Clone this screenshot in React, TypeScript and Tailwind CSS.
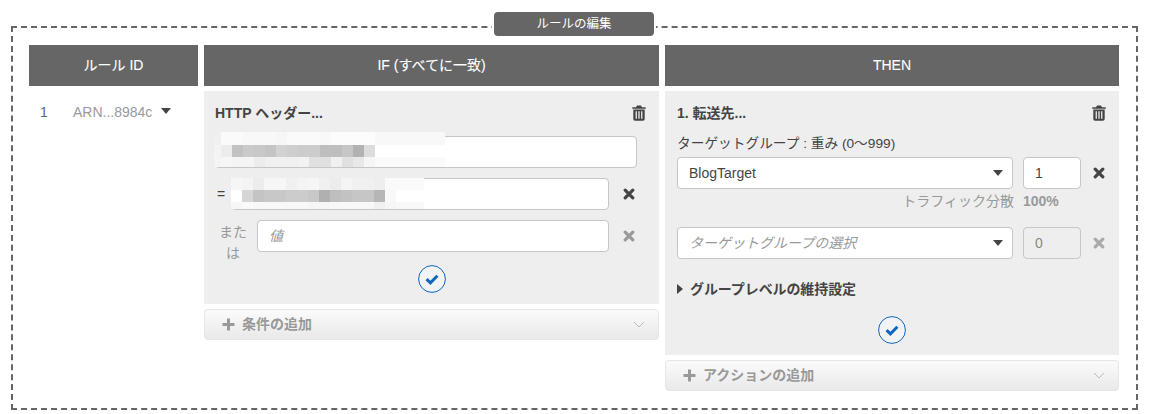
import React from "react";

const font = { fontFamily: '"Liberation Sans", "Noto Sans CJK JP", sans-serif' };

function Trash() {
  return (
    <svg width="14" height="16" viewBox="0 0 14 16" fill="#444">
      <path d="M5 0.5h4l1 1.7h3.2a.6.6 0 0 1 .6.6v.9H.2v-.9a.6.6 0 0 1 .6-.6H4z" />
      <path fillRule="evenodd" d="M1.3 4.6h11.4v9.4a1.7 1.7 0 0 1-1.7 1.7H3a1.7 1.7 0 0 1-1.7-1.7zM3.6 6.2v7.6h1.3V6.2zm2.75 0v7.6h1.3V6.2zm2.75 0v7.6h1.3V6.2z" />
    </svg>
  );
}

function Cross({ color = "#444" }: { color?: string }) {
  return (
    <svg width="12" height="12" viewBox="0 0 12 12" fill="none">
      <path d="M2.2 2.2l7.6 7.6M9.8 2.2l-7.6 7.6" stroke={color} strokeWidth="3.2" strokeLinecap="round" />
    </svg>
  );
}

function Confirm() {
  return (
    <svg width="28" height="28" viewBox="0 0 28 28" fill="none">
      <circle cx="14" cy="14" r="13.4" stroke="#1166bb" strokeWidth="1" fill="#f2f3f4" />
      <path d="M8.6 14.2l3.8 3.6 7-7" stroke="#1166bb" strokeWidth="3" />
    </svg>
  );
}

function Caret() {
  return <div className="h-0 w-0 border-x-[5px] border-t-[6px] border-x-transparent border-t-[#444]" />;
}

function Mosaic({ cols, rowH, offset, trim }: { cols: number[][]; rowH: number[]; offset: number; trim: number }) {
  const s = 11;
  const width = cols[0].length * s - offset - trim;
  const height = rowH.reduce((a, b) => a + b, 0);
  let y = 0;
  return (
    <svg width={width} height={height} className="block" shapeRendering="crispEdges">
      {cols.map((r, ri) => {
        const top = y;
        y += rowH[ri];
        return r.map((g, x) => (
          <rect key={`${x}-${ri}`} x={x * s - offset} y={top} width={s} height={rowH[ri]} fill={`rgb(${g},${g},${g})`} />
        ));
      })}
    </svg>
  );
}

const mosaicA = [
  [240, 250, 250, 248, 248, 248, 246, 250, 250, 250, 248, 252, 252, 252, 252, 248, 248, 248, 248, 248, 248, 248],
  [244, 236, 194, 202, 200, 196, 210, 206, 204, 204, 190, 190, 198, 178, 220, 255, 255, 255, 255, 255, 255, 255],
  [244, 246, 244, 244, 236, 240, 240, 240, 242, 224, 224, 240, 224, 232, 246, 250, 250, 250, 250, 250, 250, 250],
];

const mosaicB = [
  [246, 244, 236, 246, 246, 240, 244, 246, 240, 236, 244, 240, 240, 238, 250, 250, 250, 250],
  [255, 214, 196, 200, 200, 204, 204, 200, 176, 190, 194, 198, 198, 182, 248, 255, 255, 255],
  [246, 250, 248, 248, 248, 248, 248, 246, 246, 248, 248, 248, 248, 240, 246, 248, 248, 248],
];

function Field({ children, className = "" }: { children?: React.ReactNode; className?: string }) {
  return (
    <div className={`flex h-[32px] items-center rounded-[4px] border border-[#c6c6c6] bg-white text-[14px] ${className}`}>
      {children}
    </div>
  );
}

function AddBar({ label }: { label: string }) {
  return (
    <div className="mt-[5px] flex h-[31px] items-center justify-between rounded-[4px] border border-[#e6e6e6] bg-gradient-to-b from-[#fbfbfb] to-[#e9e9e9] pl-[17px] pr-[13px]">
      <div className="flex items-center gap-[7px] text-[14px] font-bold text-[#999]">
        <svg width="13" height="13" viewBox="0 0 13 13" fill="#999">
          <path d="M5 .5h3V5h4.5v3H8v4.5H5V8H.5V5H5z" />
        </svg>
        {label}
      </div>
      <svg width="12" height="7" viewBox="0 0 12 7" fill="none">
        <path d="M1 1l5 5 5-5" stroke="#bbb" strokeWidth="1" />
      </svg>
    </div>
  );
}

export default function App() {
  return (
    <div className="h-[414px] w-[1150px] bg-white pl-[11px] pt-[26px] text-[#444]" style={font}>
      <div className="relative h-[384px] w-[1127px] border-2 border-dashed border-[#666] px-[16px] pt-[17px]">
        <div className="absolute left-[479px] top-[-16px] bg-white px-[2px]">
          <div className="flex h-[24px] w-[160px] items-center justify-center rounded-[4px] bg-[#666] text-[12.5px] text-white">
            ルールの編集
          </div>
        </div>

        <div className="flex gap-[6px]">
          <div className="w-[169px]">
            <div className="flex h-[41px] items-center justify-center bg-[#666] text-[14px] text-white [-webkit-text-stroke:0.1px_white]">
              ルール ID
            </div>
            <div className="flex items-center pl-[11px] pt-[16px] text-[14px]">
              <span className="w-[33px] text-[#666]">1</span>
              <span className="text-[#999]">ARN...8984c</span>
              <div className="ml-[9px] mt-[-4px]">
                <Caret />
              </div>
            </div>
          </div>

          <div className="w-[455px]">
            <div className="flex h-[41px] items-center justify-center bg-[#666] text-[14px] text-white [-webkit-text-stroke:0.1px_white]">
              IF (すべてに一致)
            </div>
            <div className="mt-[5px] h-[213px] bg-[#eeeeee] px-[11px] pt-[11px]">
              <div className="flex h-[22px] items-center justify-between pr-[2px]">
                <span className="text-[14px] font-bold">HTTP ヘッダー...</span>
                <Trash />
              </div>
              <div className="relative mt-[12px] h-[32px] w-[422px]">
                <Field className="w-full" />
                <div className="absolute left-[-1px] top-[-4px]">
                  <Mosaic cols={mosaicA} rowH={[13, 12, 10]} offset={4} trim={7} />
                </div>
              </div>
              <div className="mt-[10px] flex items-center">
                <span className="w-[16px] pl-[2px] text-[14px]">=</span>
                <div className="relative w-[378px]">
                  <Field className="w-full" />
                  <div className="absolute left-0 top-0">
                    <Mosaic cols={mosaicB} rowH={[12, 12, 7]} offset={0} trim={5} />
                  </div>
                </div>
                <div className="ml-[14px]">
                  <Cross />
                </div>
              </div>
              <div className="mt-[10px] flex items-start">
                <span className="ml-[2px] mr-[8px] w-[32px] pt-[2px] text-center text-[14px] leading-[21px] text-[#999]">または</span>
                <Field className="w-[352px] pl-[11px] italic text-[#999]">値</Field>
                <div className="ml-[14px] mt-[10px]">
                  <Cross color="#999" />
                </div>
              </div>
              <div className="mt-[1px] flex justify-center">
                <Confirm />
              </div>
            </div>
            <AddBar label="条件の追加" />
          </div>

          <div className="w-[454px]">
            <div className="flex h-[41px] items-center justify-center bg-[#666] text-[14px] text-white [-webkit-text-stroke:0.1px_white]">
              THEN
            </div>
            <div className="mt-[5px] h-[264px] bg-[#eeeeee] px-[12px] pt-[11px]">
              <div className="flex h-[22px] items-center justify-between pr-[1px]">
                <span className="text-[14px] font-bold">1. 転送先...</span>
                <Trash />
              </div>
              <div className="mt-[10px] text-[13.7px] leading-[20px]">ターゲットグループ : 重み (0〜999)</div>
              <div className="mt-[3px] flex items-center">
                <Field className="w-[336px] justify-between pl-[11px] pr-[9px]">
                  <span>BlogTarget</span>
                  <Caret />
                </Field>
                <Field className="ml-[10px] w-[58px] pl-[11px]">1</Field>
                <div className="ml-[12px]">
                  <Cross />
                </div>
              </div>
              <div className="mt-[2px] flex h-[20px] w-[382px] items-center justify-end text-[14px] text-[#999]">
                <span>トラフィック分散</span>
                <span className="ml-[9px] w-[36px] font-bold">100%</span>
              </div>
              <div className="mt-[16px] flex items-center">
                <Field className="w-[336px] justify-between pl-[11px] pr-[9px]">
                  <span className="italic text-[#999]">ターゲットグループの選択</span>
                  <Caret />
                </Field>
                <Field className="ml-[10px] w-[58px] !bg-[#eeeeee] pl-[11px] text-[#888]">0</Field>
                <div className="ml-[12px]">
                  <Cross color="#aaa" />
                </div>
              </div>
              <div className="mt-[20px] flex h-[20px] items-center gap-[7px] text-[14px] font-bold">
                <div className="h-0 w-0 border-y-[5px] border-l-[6px] border-y-transparent border-l-[#444]" />
                <span className="tracking-[-0.1px]">グループレベルの維持設定</span>
              </div>
              <div className="mt-[17px] flex justify-center">
                <Confirm />
              </div>
            </div>
            <AddBar label="アクションの追加" />
          </div>
        </div>
      </div>
    </div>
  );
}
